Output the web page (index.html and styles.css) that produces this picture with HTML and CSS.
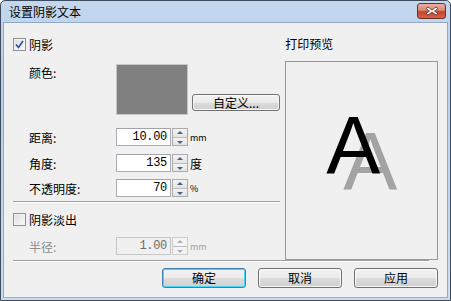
FILE: index.html
```html
<!DOCTYPE html>
<html lang="zh-CN">
<head>
    <meta charset="UTF-8">
    <title>设置阴影文本</title>
    <link rel="stylesheet" href="styles.css">
</head>
<body>
    <div class="window">
        <div class="titlebar">
            <span class="title">设置阴影文本</span>
            <div class="close-btn">
                <svg width="14" height="10" viewBox="0 0 14 10">
                    <path d="M3 1 L7 4 L11 1 L13 2.5 L9.5 5 L13 7.5 L11 9 L7 6 L3 9 L1 7.5 L4.5 5 L1 2.5 Z" fill="#fff" stroke="#5a2a22" stroke-width="0.8"/>
                </svg>
            </div>
        </div>
        <div class="client">
            <div class="main">
                <div class="left-col">
                    <label class="check-row">
                        <span class="checkbox checked">
                            <svg width="9" height="9" viewBox="0 0 9 9"><path d="M1 4.5 L3.5 7.5 L8 1" fill="none" stroke="#2a4f9e" stroke-width="1.6"/></svg>
                        </span>
                        <span>阴影</span>
                    </label>

                    <div class="color-row">
                        <span class="label">颜色:</span>
                        <div class="swatch"></div>
                        <button class="btn btn-custom">自定义...</button>
                    </div>

                    <div class="field-row first">
                        <span class="label">距离:</span>
                        <div class="input">10.00</div>
                        <div class="spinner"><span class="up"></span><span class="down"></span></div>
                        <span class="unit small">mm</span>
                    </div>
                    <div class="field-row">
                        <span class="label">角度:</span>
                        <div class="input">135</div>
                        <div class="spinner"><span class="up"></span><span class="down"></span></div>
                        <span class="unit">度</span>
                    </div>
                    <div class="field-row tight">
                        <span class="label">不透明度:</span>
                        <div class="input">70</div>
                        <div class="spinner"><span class="up"></span><span class="down"></span></div>
                        <span class="unit small">%</span>
                    </div>

                    <div class="separator"></div>

                    <label class="check-row fade">
                        <span class="checkbox"></span>
                        <span>阴影淡出</span>
                    </label>

                    <div class="field-row disabled">
                        <span class="label">半径:</span>
                        <div class="input">1.00</div>
                        <div class="spinner"><span class="up"></span><span class="down"></span></div>
                        <span class="unit small">mm</span>
                    </div>
                </div>

                <div class="right-col">
                    <div class="preview-title">打印预览</div>
                    <div class="preview">
                        <span class="glyph">A</span>
                    </div>
                </div>
            </div>

            <div class="separator bottom"></div>

            <div class="buttons">
                <button class="btn btn-default">确定</button>
                <button class="btn">取消</button>
                <button class="btn">应用</button>
            </div>
        </div>
    </div>
</body>
</html>
```

FILE: styles.css
```css
body {
    margin: 0;
    padding: 0;
    background: #ffffff;
    font-family: "Noto Sans CJK SC", "Liberation Sans", sans-serif;
    font-size: 12px;
    color: #000;
}

.window {
    width: 451px;
    height: 301px;
    box-sizing: border-box;
    border: 1px solid #3d4b5c;
    border-radius: 5px 5px 0 0;
    background: linear-gradient(to bottom, #c3d7ee, #b8d0ea 30%, #c9dcf2);
    padding: 0 2px 2px 2px;
    display: flex;
    flex-direction: column;
}

.titlebar {
    height: 21px;
    display: flex;
    align-items: center;
    justify-content: space-between;
    padding-left: 6px;
    flex-shrink: 0;
}

.title {
    font-size: 12px;
    line-height: 14px;
}

.close-btn {
    width: 27px;
    height: 14px;
    margin-right: 2px;
    margin-top: -2px;
    border: 1px solid #6a2f26;
    border-radius: 3px;
    background: linear-gradient(to bottom, #eab1a4, #d98672 45%, #c4442b 55%, #d0644a);
    display: flex;
    align-items: center;
    justify-content: center;
}

.client {
    flex: 1;
    background: #f0f0f0;
    border: 1px solid #8fa9c6;
    border-bottom-color: #5fc8e0;
    display: flex;
    flex-direction: column;
    padding: 13px 9px 0 9px;
}

.main {
    display: flex;
    height: 224px;
}

.left-col {
    width: 268px;
    display: flex;
    flex-direction: column;
}

.check-row {
    height: 16px;
    display: flex;
    align-items: center;
    gap: 3px;
}

.checkbox {
    width: 11px;
    height: 11px;
    border: 1px solid #8e8f8f;
    background: linear-gradient(135deg, #dcdcdc, #fbfbfb);
    box-shadow: inset 0 0 0 1px #f4f4f4;
    display: flex;
    align-items: center;
    justify-content: center;
}

.label {
    width: 87px;
    padding-left: 16px;
    flex-shrink: 0;
}

.color-row {
    display: flex;
    margin-top: 12px;
    height: 51px;
}

.color-row .label {
    line-height: 16px;
    padding-top: 1px;
}

.swatch {
    width: 70px;
    height: 49px;
    background: #808080;
    border: 1px solid #c8c8c8;
}

.btn {
    font-family: "Noto Sans CJK SC", "Liberation Sans", sans-serif;
    font-size: 12px;
    color: #000;
    height: 20px;
    width: 84px;
    padding: 0;
    line-height: 16px;
    border: 1px solid #707070;
    border-radius: 3px;
    background: linear-gradient(to bottom, #f2f2f2, #ebebeb 50%, #dddddd 51%, #cfcfcf);
    box-shadow: inset 0 0 0 1px #fbfbfb;
}

.btn-custom {
    width: 88px;
    height: 17px;
    line-height: 13px;
    align-self: flex-end;
    margin-left: 4px;
    margin-bottom: 4px;
}

.btn-default {
    border-color: #3c7fb1;
    box-shadow: inset 0 0 0 1px #48d8fb;
}

.field-row {
    display: flex;
    align-items: center;
    height: 18px;
    margin-top: 8px;
}

.field-row.first {
    margin-top: 13px;
}

.field-row.tight {
    margin-top: 7px;
}

.input {
    width: 50px;
    height: 16px;
    border: 1px solid #abadb3;
    border-top-color: #a0a3aa;
    background: #fff;
    text-align: right;
    padding-right: 3px;
    line-height: 16px;
    font-family: "Liberation Mono", "Noto Sans CJK SC", monospace;
    font-size: 12px;
    letter-spacing: -0.3px;
}

.spinner {
    width: 14px;
    height: 16px;
    border: 1px solid #acacac;
    margin-left: 1px;
    display: flex;
    flex-direction: column;
    background: #fff;
}

.spinner span {
    flex: 1;
    position: relative;
    background: linear-gradient(to bottom, #f3f3f3, #e4e4e4);
}

.spinner .up {
    border-bottom: 1px solid #bdbdbd;
}

.spinner .up::after,
.spinner .down::after {
    content: "";
    position: absolute;
    left: 4px;
    top: 2px;
    border-left: 3px solid transparent;
    border-right: 3px solid transparent;
}

.spinner .up::after {
    border-bottom: 3px solid #4d6185;
}

.spinner .down::after {
    top: 3px;
    border-top: 3px solid #4d6185;
}

.unit {
    margin-left: 2px;
}

.unit.small {
    font-size: 9px;
}

.separator {
    height: 1px;
    background: #a0a0a0;
    border-bottom: 1px solid #ffffff;
    margin-top: 4px;
}

.check-row.fade {
    margin-top: 8px;
}

.field-row.disabled {
    margin-top: 10px;
    color: #a0a0a0;
}

.field-row.disabled .label {
    color: #8d8d8d;
}

.field-row.disabled .input {
    background: #f0f0f0;
    border-color: #c6c6c6;
    color: #6d6d6d;
}

.field-row.disabled .spinner {
    border-color: #cdcdcd;
}

.field-row.disabled .spinner span {
    background: #f4f4f4;
}

.field-row.disabled .spinner .up::after {
    border-bottom-color: #b0b0b0;
}

.field-row.disabled .spinner .down::after {
    border-top-color: #b0b0b0;
}

.right-col {
    margin-left: 5px;
    width: 153px;
    display: flex;
    flex-direction: column;
}

.preview-title {
    height: 16px;
    line-height: 16px;
}

.preview {
    margin-top: 9px;
    height: 184px;
    border: 1px solid #6f9fd4;
    display: flex;
    padding: 43px 0 0 40px;
    overflow: hidden;
}

/* shadow is drawn with text-shadow, offset for 135 deg */
.glyph {
    font-family: "Liberation Sans", Arial, sans-serif;
    font-size: 81px;
    line-height: 1;
    height: 81px;
    color: #000;
    text-shadow: 17px 16px 0 #a3a3a3;
}

.separator.bottom {
    margin-top: 0;
    margin-right: 9px;
}

.buttons {
    display: flex;
    justify-content: flex-end;
    gap: 12px;
    margin-top: 6px;
    margin-right: 0;
}
```
